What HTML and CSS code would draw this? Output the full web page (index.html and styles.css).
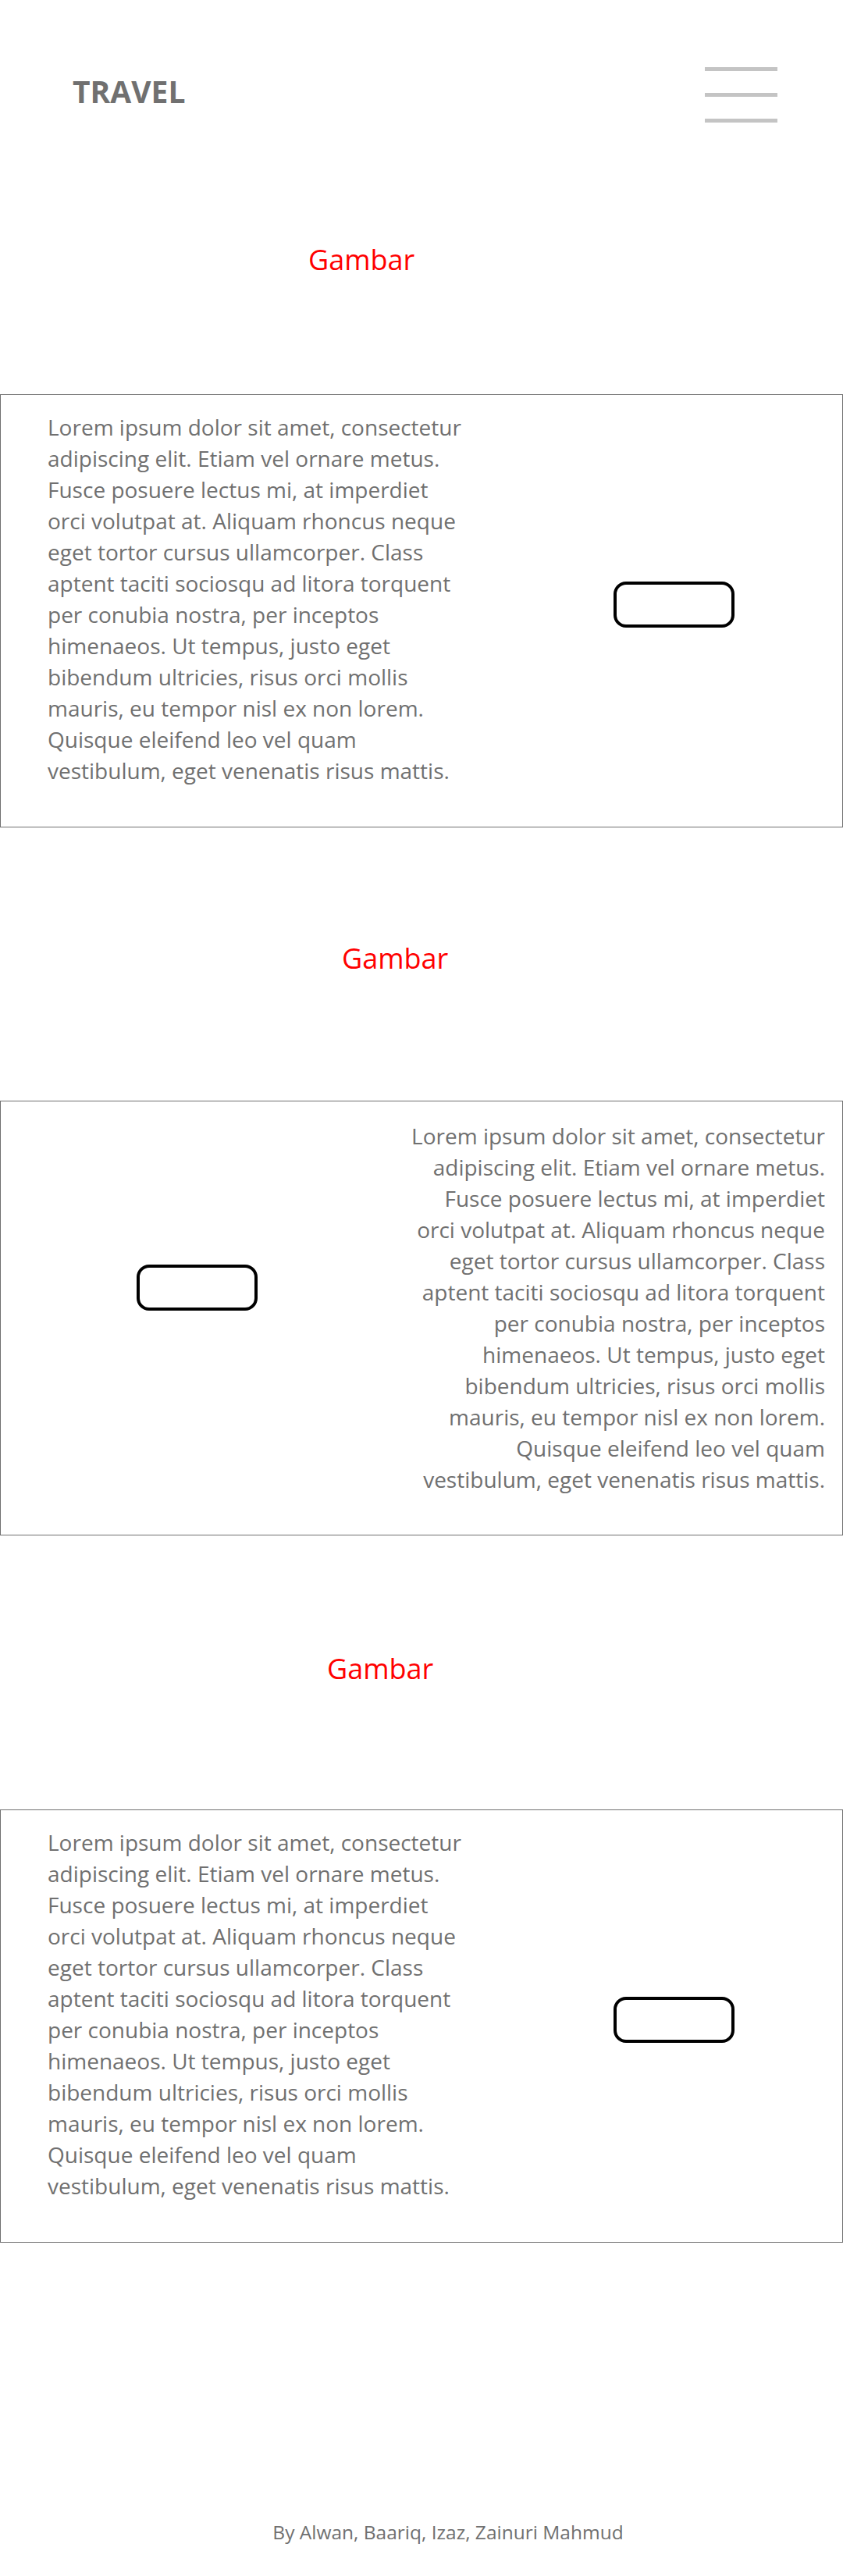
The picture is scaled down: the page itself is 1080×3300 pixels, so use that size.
FILE: index.html
```html
<!DOCTYPE html>
<html lang="id">
<head>
<meta charset="utf-8">
<title>Travel</title>
<link rel="stylesheet" href="styles.css">
</head>
<body>
<header class="site-header">
  <div class="logo">TRAVEL</div>
  <div class="menu">
    <span class="menu-line"></span>
    <span class="menu-line"></span>
    <span class="menu-line"></span>
  </div>
</header>
<main>
  <section class="feature">
    <div class="figure figure-1"><span class="figure-alt">Gambar</span></div>
    <div class="card">
      <p class="card-text">Lorem ipsum dolor sit amet, consectetur<br>adipiscing elit. Etiam vel ornare metus.<br>Fusce posuere lectus mi, at imperdiet<br>orci volutpat at. Aliquam rhoncus neque<br>eget tortor cursus ullamcorper. Class<br>aptent taciti sociosqu ad litora torquent<br>per conubia nostra, per inceptos<br>himenaeos. Ut tempus, justo eget<br>bibendum ultricies, risus orci mollis<br>mauris, eu tempor nisl ex non lorem.<br>Quisque eleifend leo vel quam<br>vestibulum, eget venenatis risus mattis.</p>
      <div class="card-action"><button class="btn" type="button"></button></div>
    </div>
  </section>
  <section class="feature">
    <div class="figure figure-2"><span class="figure-alt">Gambar</span></div>
    <div class="card card-reverse">
      <div class="card-action"><button class="btn" type="button"></button></div>
      <p class="card-text">Lorem ipsum dolor sit amet, consectetur<br>adipiscing elit. Etiam vel ornare metus.<br>Fusce posuere lectus mi, at imperdiet<br>orci volutpat at. Aliquam rhoncus neque<br>eget tortor cursus ullamcorper. Class<br>aptent taciti sociosqu ad litora torquent<br>per conubia nostra, per inceptos<br>himenaeos. Ut tempus, justo eget<br>bibendum ultricies, risus orci mollis<br>mauris, eu tempor nisl ex non lorem.<br>Quisque eleifend leo vel quam<br>vestibulum, eget venenatis risus mattis.</p>
    </div>
  </section>
  <section class="feature">
    <div class="figure figure-3"><span class="figure-alt">Gambar</span></div>
    <div class="card">
      <p class="card-text">Lorem ipsum dolor sit amet, consectetur<br>adipiscing elit. Etiam vel ornare metus.<br>Fusce posuere lectus mi, at imperdiet<br>orci volutpat at. Aliquam rhoncus neque<br>eget tortor cursus ullamcorper. Class<br>aptent taciti sociosqu ad litora torquent<br>per conubia nostra, per inceptos<br>himenaeos. Ut tempus, justo eget<br>bibendum ultricies, risus orci mollis<br>mauris, eu tempor nisl ex non lorem.<br>Quisque eleifend leo vel quam<br>vestibulum, eget venenatis risus mattis.</p>
      <div class="card-action"><button class="btn" type="button"></button></div>
    </div>
  </section>
</main>
<footer class="site-footer">By Alwan, Baariq, Izaz, Zainuri Mahmud</footer>
</body>
</html>
```
FILE: styles.css
```css
html, body {
  margin: 0;
  padding: 0;
  background: #ffffff;
}

body {
  font-family: "Open Sans", "Noto Sans", sans-serif;
  color: #707070;
}

.site-header {
  display: flex;
  justify-content: space-between;
  align-items: flex-start;
  height: 243px;
  box-sizing: border-box;
  padding: 86px 84px 0 93px;
}

.logo {
  font-size: 39px;
  font-weight: 700;
  line-height: 54px;
  margin-top: 4px;
  color: #707070;
}

.menu {
  width: 93px;
  display: flex;
  flex-direction: column;
  gap: 28px;
}

.menu-line {
  display: block;
  height: 5px;
  background: #c4c4c4;
}

.figure {
  box-sizing: border-box;
}

.figure-alt {
  display: block;
  font-size: 36px;
  line-height: 49px;
  color: #ff0000;
}

.figure-1 {
  height: 262px;
  padding: 65px 0 0 395px;
}

.figure-2 {
  height: 350px;
  padding: 143px 0 0 438px;
}

.figure-3 {
  height: 351px;
  padding: 146px 0 0 419px;
}

.card {
  display: flex;
  align-items: flex-start;
  border: 1px solid #707070;
}

.card-text {
  flex: none;
  width: 560px;
  margin: 0 0 0 60px;
  padding: 21px 0 52px;
  font-size: 28px;
  line-height: 40px;
  color: #707070;
}

.card-action {
  flex: 1;
  padding: 239px 0 0 165px;
}

.card-reverse .card-text {
  margin: 0 22px 0 0;
  padding: 24px 0 51px;
  text-align: right;
}

.card-reverse .card-action {
  padding: 209px 0 0 174px;
}

.btn {
  display: block;
  width: 155px;
  height: 59px;
  box-sizing: border-box;
  padding: 0;
  border: 4px solid #000000;
  border-radius: 16px;
  background: #ffffff;
}

.site-footer {
  margin-top: 354px;
  padding-left: 68px;
  text-align: center;
  font-size: 24.5px;
  line-height: 33px;
  color: #707070;
}
```
